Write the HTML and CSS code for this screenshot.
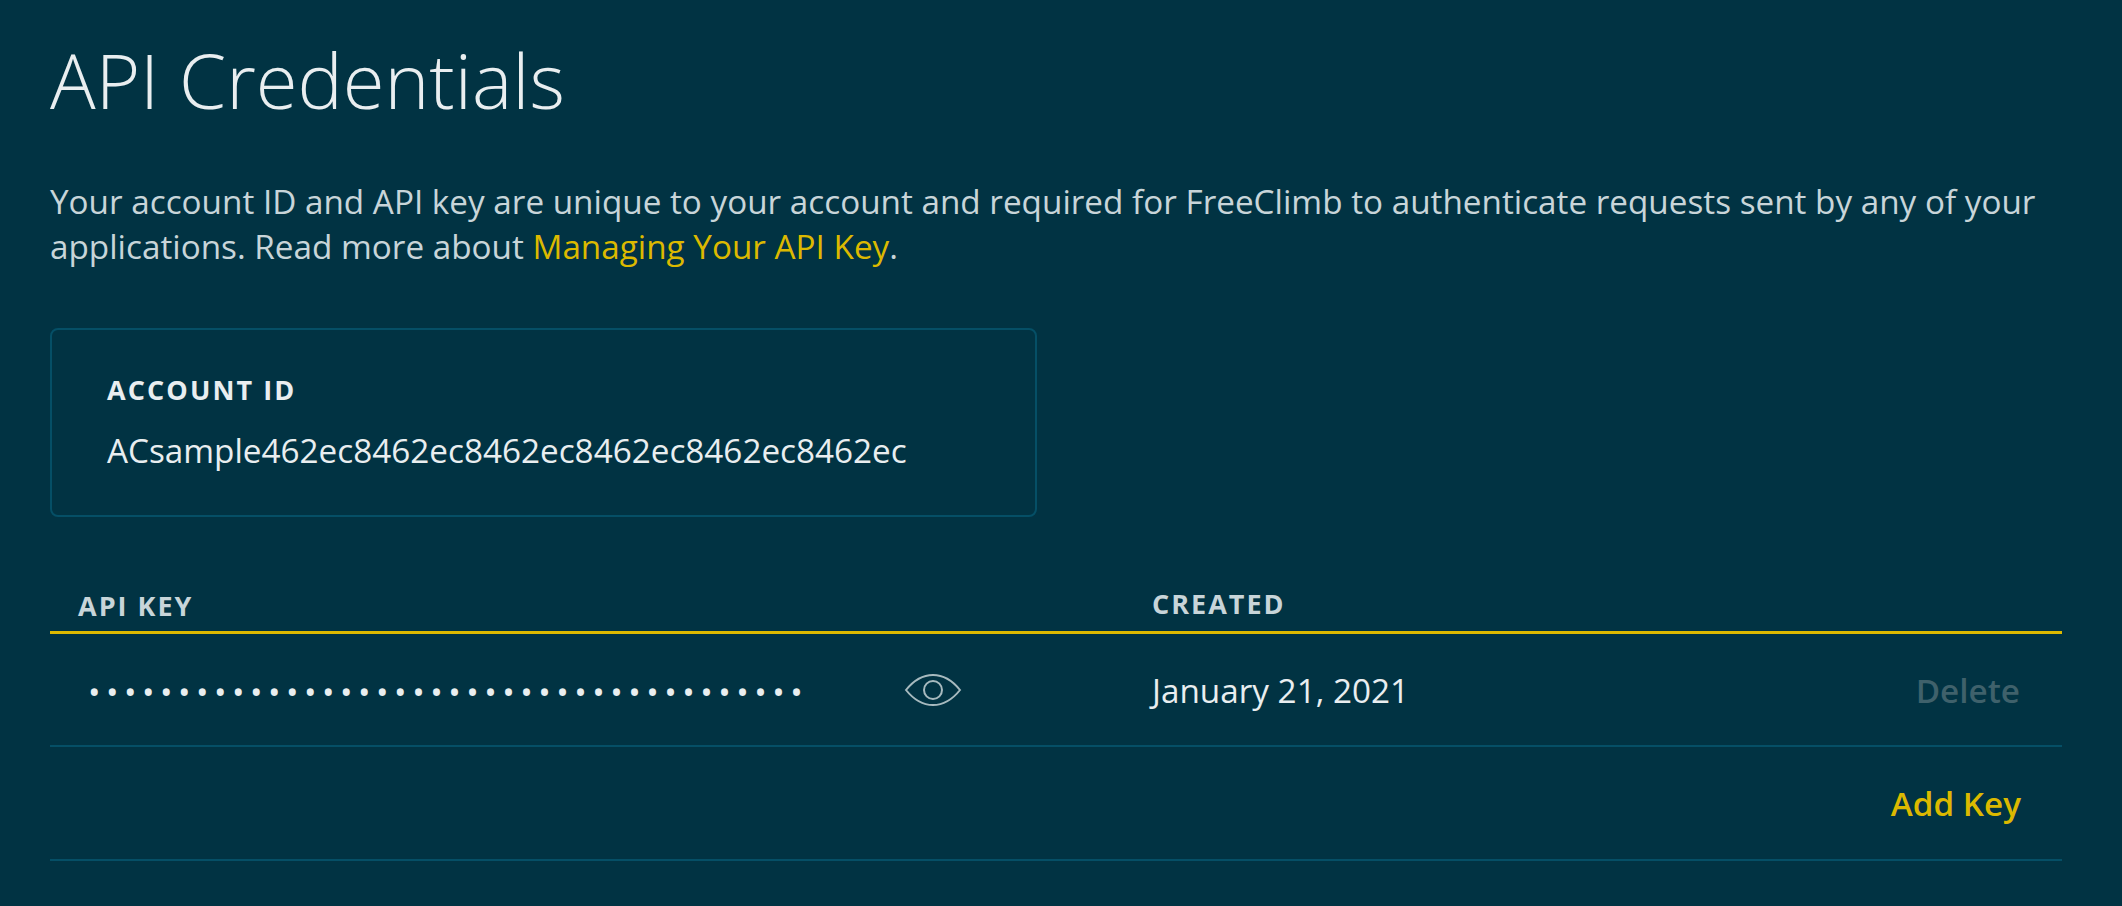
FILE: index.html
```html
<!DOCTYPE html>
<html>
<head>
  <title>API Credentials</title>
  <link rel="stylesheet" href="styles.css">
</head>
<body>
  <div class="page">
    <h1>API Credentials</h1>
    <p class="intro">Your account ID and API key are unique to your account and required for FreeClimb to authenticate requests sent by any of your applications. Read more about <a href="#">Managing Your API Key</a>.</p>

    <div class="account-box">
      <div class="label">ACCOUNT ID</div>
      <div class="account-id">ACsample462ec8462ec8462ec8462ec8462ec8462ec</div>
    </div>

    <div class="keys">
      <div class="key-row key-head">
        <div class="key-col">API KEY</div>
        <div class="created-col">CREATED</div>
      </div>
      <div class="key-row key-item">
        <div class="key-col">
          <span class="dots">••••••••••••••••••••••••••••••••••••••••</span>
          <svg class="eye" width="58" height="34" viewBox="0 0 58 34" fill="none" stroke="#a7babf" stroke-width="2">
            <path d="M2 17C10 7 19 2 29 2s19 5 27 15C48 27 39 32 29 32S10 27 2 17z"/>
            <circle cx="29" cy="17" r="9"/>
          </svg>
        </div>
        <div class="created-col">January 21, 2021</div>
        <a class="delete" href="#">Delete</a>
      </div>
      <div class="key-row add-row">
        <a class="add-key" href="#">Add Key</a>
      </div>
    </div>
  </div>
</body>
</html>
```

FILE: styles.css
```css
body { background: #013343; font-family: "Open Sans", sans-serif; margin: 0; color: #e9eef0; }
a { text-decoration: none; }
.page { padding: 31px 60px 0 50px; }
h1 { font-size: 76px; font-weight: 300; line-height: 98px; margin: 0 0 50px; color: #e9eef0; }
.intro { font-size: 33.28px; line-height: 45px; margin: 0 0 59px; color: #c8d5d9; }
.intro a { color: #dcb900; }
.account-box { width: 987px; height: 189px; box-sizing: border-box; border: 2px solid #054f66; border-radius: 8px; padding: 42px 55px; margin-bottom: 65px; }
.label { font-size: 27px; font-weight: 700; letter-spacing: 2.1px; line-height: 36px; }
.account-id { font-size: 33.28px; line-height: 44px; margin-top: 20px; }
.keys { width: 2012px; }
.key-row { display: flex; align-items: center; box-sizing: border-box; }
.key-col { width: 1102px; box-sizing: border-box; padding-left: 28px; display: flex; align-items: center; }
.key-head { height: 52px; border-bottom: 3px solid #dcb900; font-size: 27px; font-weight: 700; letter-spacing: 2px; color: #c8d5d9; }
.key-head .key-col { padding-bottom: 2px; }
.key-head .created-col { padding-bottom: 6px; }
.key-item { height: 113px; border-bottom: 2px solid #054f66; font-size: 33.28px; }
.dots { width: 826px; padding: 2px 0 0 10px; box-sizing: border-box; font-size: 33.28px; letter-spacing: 5.5px; white-space: nowrap; overflow: hidden; }
.eye { display: block; }
.delete { margin-left: auto; margin-right: 42px; font-weight: 600; color: #3f616b; }
.add-row { height: 114px; border-bottom: 2px solid #054f66; justify-content: flex-end; }
.add-key { margin-right: 41px; font-size: 33.28px; font-weight: 600; color: #dcb900; }
```
